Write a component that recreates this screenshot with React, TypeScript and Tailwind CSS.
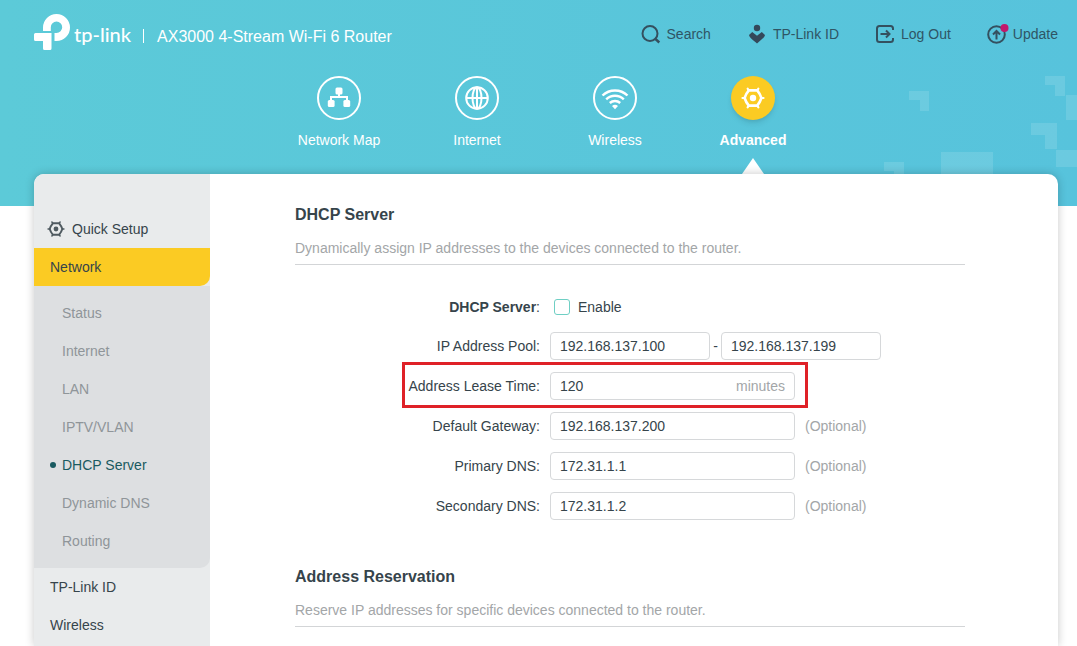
import React from 'react';
import clsx from 'clsx';

const subItems = ['Status', 'Internet', 'LAN', 'IPTV/VLAN', 'DHCP Server', 'Dynamic DNS', 'Routing'];

const dnsFields = [
  { id: 'gateway', label: 'Default Gateway:', value: '192.168.137.200' },
  { id: 'primary-dns', label: 'Primary DNS:', value: '172.31.1.1' },
  { id: 'secondary-dns', label: 'Secondary DNS:', value: '172.31.1.2' },
];

const inputClass = 'h-7 rounded border border-[#d6d8da] bg-white px-[9px] text-[#36444b] outline-none';

function LogoMark() {
  return (
    <svg width="36" height="36" viewBox="0 0 36 36" fill="#fff" aria-hidden="true">
      <path d="M9 17V13.5a13.5 13.5 0 1 1 13.5 13.5h-2v-8h2a5.7 5.7 0 1 0-5.7-5.7V17z" />
      <path d="M1.500 19H17.500V34.500a1.500 1.500 0 0 1-1.500 1.500H10.500a1.500 1.500 0 0 1-1.500-1.500V27H1.500A1.500 1.500 0 0 1 0 25.500V20.500A1.500 1.500 0 0 1 1.500 19z" />
    </svg>
  );
}

function GearIcon({ size }: { size: number }) {
  return (
    <svg width={size} height={size} viewBox="0 0 24 24" fill="none" stroke="currentColor" aria-hidden="true">
      <path d="M7.800 4.400h8.400q2.900 3.400 4.200 7.600-1.300 4.200-4.200 7.600H7.800Q4.900 16.200 3.600 12 4.900 7.800 7.800 4.400z" strokeWidth="2.600" strokeLinejoin="round" />
      <path d="M7.300 3.800 6.700 2.700M16.700 3.800l.6-1.100M21 12h1.500M16.700 20.200l.6 1.100M7.300 20.200l-.6 1.100M3 12H1.500" strokeWidth="2.200" strokeLinecap="round" />
      <circle cx="12" cy="12" r="3.200" fill="currentColor" stroke="none" />
    </svg>
  );
}

function SearchIcon() {
  return (
    <svg width="20" height="20" viewBox="0 0 20 20" fill="none" stroke="#34505f" strokeWidth="2" aria-hidden="true">
      <circle cx="9" cy="9.500" r="7.500" />
      <path d="m14.500 15 3.800 3.500" strokeWidth="2.400" />
    </svg>
  );
}

function CloudIdIcon() {
  return (
    <svg width="20" height="20" viewBox="0 0 20 20" fill="#34485a" aria-hidden="true">
      <circle cx="10" cy="4" r="3.200" />
      <path d="m2 11 3.200-3 4.800 3.800L14.800 8l3.200 3c-.8 3.200-4.500 5.200-8 8.500C6.500 16.200 2.800 14.200 2 11z" />
    </svg>
  );
}

function LogOutIcon() {
  return (
    <svg width="20" height="20" viewBox="0 0 20 20" fill="none" stroke="#34505f" strokeWidth="2" aria-hidden="true">
      <path d="M18 6V4.500A2.500 2.500 0 0 0 15.500 2h-11A2.500 2.500 0 0 0 2 4.500v11A2.500 2.500 0 0 0 4.500 18h11a2.500 2.500 0 0 0 2.500-2.500V14" />
      <path d="M5.500 10H14M11 6.500l3.500 3.500-3.500 3.500" />
    </svg>
  );
}

function UpdateIcon() {
  return (
    <svg width="20" height="20" viewBox="0 0 20 20" fill="none" stroke="#34505f" strokeWidth="2" className="overflow-visible" aria-hidden="true">
      <circle cx="9.500" cy="10.500" r="8.300" />
      <path d="M9.500 15.500V7.500M6 10.500 9.500 7l3.500 3.500" />
      <circle cx="17.500" cy="4" r="4" fill="#c2186b" stroke="none" />
    </svg>
  );
}

function NetworkMapIcon() {
  return (
    <svg width="24" height="24" viewBox="0 0 24 24" fill="#fff" aria-hidden="true">
      <rect x="8.500" y="1.500" width="7" height="7" rx="1.500" />
      <rect x="0.800" y="14" width="6.800" height="7" rx="1.500" />
      <rect x="16.400" y="14" width="6.800" height="7" rx="1.500" />
      <path d="M12 8v3M4 15v-4h16V15" fill="none" stroke="#fff" strokeWidth="2" />
    </svg>
  );
}

function GlobeIcon() {
  return (
    <svg width="24" height="24" viewBox="0 0 24 24" fill="none" stroke="#fff" strokeWidth="2" aria-hidden="true">
      <circle cx="12" cy="12" r="10.800" />
      <ellipse cx="12" cy="12" rx="4.500" ry="10.800" />
      <path d="M1.200 12h21.600M12 1.200v21.600" />
    </svg>
  );
}

function WifiIcon() {
  return (
    <svg width="28" height="24" viewBox="0 0 28 24" fill="none" stroke="#fff" strokeWidth="2.400" aria-hidden="true">
      <path d="M1.500 9.500a18 18 0 0 1 25 0M5.200 13.300a12.800 12.800 0 0 1 17.600 0M8.800 17a7.800 7.800 0 0 1 10.400 0" />
      <path d="M11 20a4.500 4.500 0 0 1 6 0l-3 3.200z" fill="#fff" stroke="none" />
    </svg>
  );
}

const topLinks = [
  { label: 'Search', icon: <SearchIcon /> },
  { label: 'TP-Link ID', icon: <CloudIdIcon /> },
  { label: 'Log Out', icon: <LogOutIcon /> },
  { label: 'Update', icon: <UpdateIcon /> },
];

const tabs = [
  { label: 'Network Map', icon: <NetworkMapIcon /> },
  { label: 'Internet', icon: <GlobeIcon /> },
  { label: 'Wireless', icon: <WifiIcon /> },
  { label: 'Advanced', icon: <GearIcon size={24} />, active: true },
];

function Header() {
  return (
    <header className="relative bg-linear-to-r from-[#5ccad8] to-[#57c3dc] pr-[19px] pb-8 pl-[34px]">
      {/* pixel pattern in the corner */}
      <svg className="absolute right-0 bottom-0" width="197" height="136" viewBox="0 0 197 136" fill="#fff" fillOpacity="0.12" aria-hidden="true">
        <path d="M29 21h20v20h-9V30H29zM165 6h20v20h-10V15h-10zM186 25h11v25h-11zM151 53h26v26h-12V65h-14zM176 80h21v17h-21zM4 92h20v20H14v-11H4zM61 82h52v30H61z" />
      </svg>
      <div className="relative flex h-[68px] items-center justify-between">
        <div className="flex items-center text-white">
          <a href="#home" className="flex items-center gap-1 pb-1" aria-label="tp-link">
            <LogoMark />
            <span className="pt-1 font-[Lato,sans-serif] text-[20px] leading-6 font-medium">tp-link</span>
          </a>
          <span className="mt-1 ml-3 h-[14px] w-px bg-white" />
          <span className="mt-1 ml-[13px] pt-0.5 text-base leading-6">AX3000 4-Stream Wi-Fi 6 Router</span>
        </div>
        <nav className="flex gap-9">
          {topLinks.map((link) => (
            <a key={link.label} href="#" className="flex items-center gap-1.5 text-[#2f5565]">
              {link.icon}
              {link.label}
            </a>
          ))}
        </nav>
      </div>
      <nav className="relative flex justify-center pt-2">
        {tabs.map((tab) => (
          <a key={tab.label} href="#" className="flex w-[138px] flex-col items-center text-white">
            <span
              className={clsx(
                'flex size-11 items-center justify-center rounded-full',
                tab.active ? 'bg-[#fbcb23] shadow-md' : 'border-2 border-white',
              )}
            >
              {tab.icon}
            </span>
            <span className={clsx('mt-[10px] leading-5', tab.active && 'font-bold')}>{tab.label}</span>
            <svg className="mt-2" width="22" height="16" viewBox="0 0 22 16" aria-hidden="true">
              {tab.active && <path d="M11 0 22 16H0z" fill="#fff" />}
            </svg>
          </a>
        ))}
      </nav>
    </header>
  );
}

function Sidebar() {
  return (
    <aside className="w-44 shrink-0 rounded-tl-[10px] bg-[#e9ebec] pt-9 text-[#36444b]">
      <a href="#" className="flex h-[38px] items-center gap-[7px] pl-[13px]">
        <span className="text-[#4f5a60]">
          <GearIcon size={18} />
        </span>
        Quick Setup
      </a>
      <a href="#" className="flex h-[38px] items-center rounded-br-[10px] bg-[#fbcb23] pl-4">Network</a>
      <ul className="rounded-br-[10px] bg-[#dddfe1] py-2">
        {subItems.map((item) => (
          <li key={item}>
            <a
              href="#"
              className={clsx(
                'flex h-[38px] items-center gap-1.5 pl-4',
                item === 'DHCP Server' ? 'text-[#195a60]' : 'text-[#8f9599]',
              )}
            >
              <span className={clsx('size-1.5 rounded-full', item === 'DHCP Server' && 'bg-[#195a60]')} />
              {item}
            </a>
          </li>
        ))}
      </ul>
      <a href="#" className="flex h-[38px] items-center pl-4">TP-Link ID</a>
      <a href="#" className="flex h-[38px] items-center pl-4">Wireless</a>
    </aside>
  );
}

function SectionTitle({ title, text }: { title: string; text: string }) {
  return (
    <div className="border-b border-[#d3d5d7] pb-1.5">
      <h2 className="text-base leading-6 font-bold text-[#36444b]">{title}</h2>
      <p className="mt-[11px] leading-5 text-[#a3a6a8]">{text}</p>
    </div>
  );
}

export default function App() {
  return (
    <div className="flex min-h-screen flex-col bg-white font-['Liberation_Sans',Arial,sans-serif] text-sm">
      <Header />
      <div className="relative -mt-8 mr-[19px] ml-[34px] flex flex-1 rounded-t-[10px] bg-white shadow-[0_0_10px_rgba(0,0,0,0.22)]">
        <Sidebar />
        <main className="min-w-0 flex-1 pt-[29px] pr-[93px] pl-[85px] text-[#36444b]">
          <SectionTitle title="DHCP Server" text="Dynamically assign IP addresses to the devices connected to the router." />

          <form className="mt-[23px]">
            <div className="flex h-[38px] items-center">
              <span className="w-[245px] text-right">
                <b>DHCP Server</b>:
              </span>
              <label className="ml-[14px] flex items-center gap-2">
                <input type="checkbox" className="size-4 appearance-none rounded-[3px] border border-[#6fcfc4] bg-white" />
                Enable
              </label>
            </div>
            <div className="flex h-10 items-center">
              <label htmlFor="pool-start" className="w-[245px] text-right">IP Address Pool:</label>
              <input id="pool-start" defaultValue="192.168.137.100" className={clsx(inputClass, 'ml-[10px] w-40')} />
              <span className="w-[11px] text-center">-</span>
              <input aria-label="IP Address Pool end" defaultValue="192.168.137.199" className={clsx(inputClass, 'w-40')} />
            </div>
            <div className="relative flex h-10 items-center">
              <label htmlFor="lease" className="w-[245px] text-right">Address Lease Time:</label>
              <div className={clsx(inputClass, 'ml-[10px] flex w-[245px] items-center')}>
                <input id="lease" defaultValue="120" className="min-w-0 flex-1 outline-none" />
                <span className="text-[#a3a6a8]">minutes</span>
              </div>
              <div className="pointer-events-none absolute -top-1 -bottom-0.5 left-[107px] w-[406px] border-3 border-[#df2127]" />
            </div>
            {dnsFields.map((field) => (
              <div key={field.id} className="flex h-10 items-center">
                <label htmlFor={field.id} className="w-[245px] text-right">{field.label}</label>
                <input id={field.id} defaultValue={field.value} className={clsx(inputClass, 'ml-[10px] w-[245px]')} />
                <span className="ml-[10px] text-[#a3a6a8]">(Optional)</span>
              </div>
            ))}
          </form>

          <div className="mt-[39px]">
            <SectionTitle title="Address Reservation" text="Reserve IP addresses for specific devices connected to the router." />
          </div>
        </main>
      </div>
    </div>
  );
}
